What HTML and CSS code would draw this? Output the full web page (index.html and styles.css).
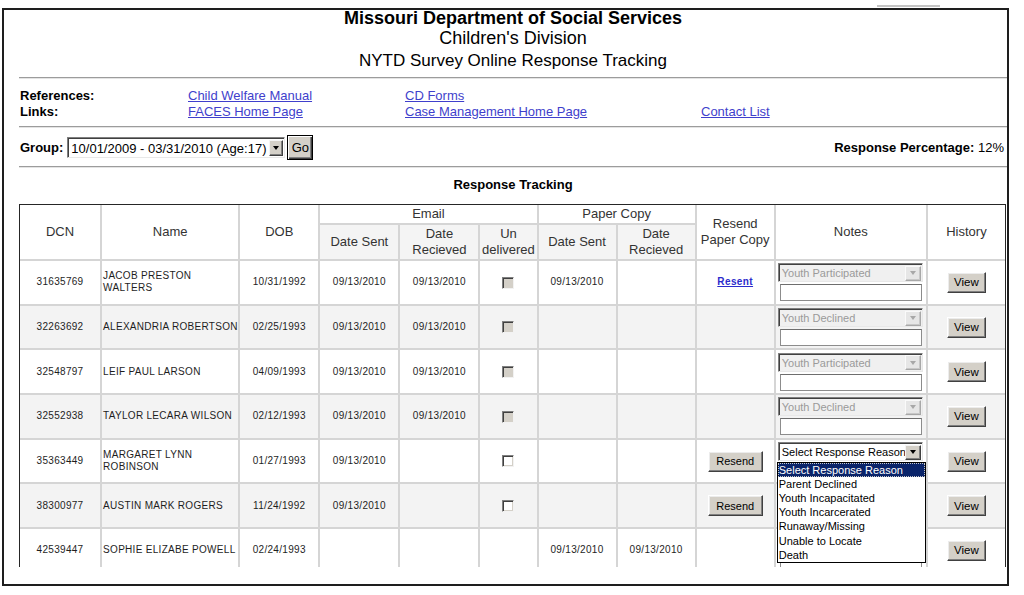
FILE: index.html
```html
<!DOCTYPE html>
<html>
<head>
<meta charset="utf-8">
<title>NYTD Survey Online Response Tracking</title>
<link rel="stylesheet" href="styles.css">
</head>
<body>
<div class="topbar"><div class="tab"></div></div>
<div class="frame">
  <div class="page">
    <div class="titles">
      <div class="t1">Missouri Department of Social Services</div>
      <div class="t2">Children's Division</div>
      <div class="t3">NYTD Survey Online Response Tracking</div>
    </div>
    <div class="rule"></div>
    <div class="refs">
      <div class="lbl">References:</div>
      <div><a href="#">Child Welfare Manual</a></div>
      <div><a href="#">CD Forms</a></div>
      <div></div>
      <div class="lbl">Links:</div>
      <div><a href="#">FACES Home Page</a></div>
      <div><a href="#">Case Management Home Page</a></div>
      <div><a href="#">Contact List</a></div>
    </div>
    <div class="rule r2"></div>
    <div class="grouprow">
      <div class="grp">
        <span class="lbl">Group:</span>
        <div class="sel groupsel"><span class="seltext">10/01/2009 - 03/31/2010 (Age:17)</span><span class="arrow"></span></div>
        <button class="btn go" type="button">Go</button>
      </div>
      <div class="pct"><b>Response Percentage:</b> 12%</div>
    </div>
    <div class="rule r3"></div>
    <div class="sectitle">Response Tracking</div>
    <div class="tablewrap">
      <table class="grid">
        <colgroup>
          <col class="c-dcn"><col class="c-name"><col class="c-dob"><col class="c-d"><col class="c-d"><col class="c-un"><col class="c-p"><col class="c-p"><col class="c-p"><col class="c-notes"><col class="c-hist">
        </colgroup>
        <thead>
          <tr class="hr1">
            <th rowspan="2">DCN</th>
            <th rowspan="2">Name</th>
            <th rowspan="2">DOB</th>
            <th colspan="3">Email</th>
            <th colspan="2">Paper Copy</th>
            <th rowspan="2">Resend<br>Paper Copy</th>
            <th rowspan="2">Notes</th>
            <th rowspan="2" class="last">History</th>
          </tr>
          <tr class="hr2">
            <th class="sub">Date Sent</th>
            <th class="sub">Date<br>Recieved</th>
            <th class="sub">Un<br>delivered</th>
            <th class="sub">Date Sent</th>
            <th class="sub">Date<br>Recieved</th>
          </tr>
        </thead>
        <tbody>
          <tr>
            <td>31635769</td><td class="nm">JACOB PRESTON WALTERS</td><td>10/31/1992</td><td>09/13/2010</td><td>09/13/2010</td>
            <td><span class="cb dis"></span></td><td>09/13/2010</td><td></td><td><a href="#" class="resent">Resent</a></td>
            <td class="notes"><div class="sel nsel dsel"><span class="seltext">Youth Participated</span><span class="arrow"></span></div><input class="ntext" type="text"></td>
            <td class="last"><button class="btn view" type="button">View</button></td>
          </tr>
          <tr class="alt">
            <td>32263692</td><td class="nm">ALEXANDRIA ROBERTSON</td><td>02/25/1993</td><td>09/13/2010</td><td>09/13/2010</td>
            <td><span class="cb dis"></span></td><td></td><td></td><td></td>
            <td class="notes"><div class="sel nsel dsel"><span class="seltext">Youth Declined</span><span class="arrow"></span></div><input class="ntext" type="text"></td>
            <td class="last"><button class="btn view" type="button">View</button></td>
          </tr>
          <tr>
            <td>32548797</td><td class="nm">LEIF PAUL LARSON</td><td>04/09/1993</td><td>09/13/2010</td><td>09/13/2010</td>
            <td><span class="cb dis"></span></td><td></td><td></td><td></td>
            <td class="notes"><div class="sel nsel dsel"><span class="seltext">Youth Participated</span><span class="arrow"></span></div><input class="ntext" type="text"></td>
            <td class="last"><button class="btn view" type="button">View</button></td>
          </tr>
          <tr class="alt">
            <td>32552938</td><td class="nm">TAYLOR LECARA WILSON</td><td>02/12/1993</td><td>09/13/2010</td><td>09/13/2010</td>
            <td><span class="cb dis"></span></td><td></td><td></td><td></td>
            <td class="notes"><div class="sel nsel dsel"><span class="seltext">Youth Declined</span><span class="arrow"></span></div><input class="ntext" type="text"></td>
            <td class="last"><button class="btn view" type="button">View</button></td>
          </tr>
          <tr>
            <td>35363449</td><td class="nm">MARGARET LYNN ROBINSON</td><td>01/27/1993</td><td>09/13/2010</td><td></td>
            <td><span class="cb"></span></td><td></td><td></td><td><button class="btn resend" type="button">Resend</button></td>
            <td class="notes">
              <div class="selwrap">
                <div class="sel nsel"><span class="seltext">Select Response Reason</span><span class="arrow"></span></div>
                <ul class="listbox">
                  <li class="on">Select Response Reason</li>
                  <li>Parent Declined</li>
                  <li>Youth Incapacitated</li>
                  <li>Youth Incarcerated</li>
                  <li>Runaway/Missing</li>
                  <li>Unable to Locate</li>
                  <li>Death</li>
                </ul>
              </div>
              <input class="ntext" type="text">
            </td>
            <td class="last"><button class="btn view" type="button">View</button></td>
          </tr>
          <tr class="alt">
            <td>38300977</td><td class="nm">AUSTIN MARK ROGERS</td><td>11/24/1992</td><td>09/13/2010</td><td></td>
            <td><span class="cb"></span></td><td></td><td></td><td><button class="btn resend" type="button">Resend</button></td>
            <td class="notes"><div class="sel nsel"><span class="seltext"></span><span class="arrow"></span></div><input class="ntext" type="text"></td>
            <td class="last"><button class="btn view" type="button">View</button></td>
          </tr>
          <tr>
            <td>42539447</td><td class="nm">SOPHIE ELIZABE POWELL</td><td>02/24/1993</td><td></td><td></td>
            <td></td><td>09/13/2010</td><td>09/13/2010</td><td></td>
            <td class="notes"><div class="sel nsel"><span class="seltext"></span><span class="arrow"></span></div><input class="ntext" type="text"></td>
            <td class="last"><button class="btn view" type="button">View</button></td>
          </tr>
        </tbody>
      </table>
    </div>
  </div>
</div>
</body>
</html>
```

FILE: styles.css
```css
* { box-sizing: border-box; }
html, body { margin: 0; padding: 0; background: #fff; }
body { font-family: "Liberation Sans", Arial, sans-serif; color: #000; }

.topbar { height: 8px; padding-top: 5px; }
.tab { margin-left: 877px; width: 63px; height: 2px; background: #c4c4c4; }

.frame { margin-left: 2px; width: 1007px; height: 578px; border: 2px solid #1e1e1e; overflow-x: clip; background: #fff; }
.page { width: 1018px; }

.titles { text-align: center; color: #000; }
.t1 { font-size: 18px; font-weight: bold; line-height: 16px; }
.t2 { font-size: 18px; line-height: 25px; }
.t3 { font-size: 17px; line-height: 19px; }

.rule { margin: 7px 15px 0 15px; height: 2px; border-top: 1px solid #9c9c9c; border-bottom: 1px solid #e4e4e4; }
.r2 { margin-top: 6px; }
.r3 { margin-top: 6px; }

.refs { display: grid; grid-template-columns: 168px 217px 296px 1fr; padding: 9px 0 0 16px; font-size: 13px; line-height: 16px; }
.lbl { font-weight: bold; font-size: 13px; }
.refs a { color: #3f3fcc; text-decoration: underline; }

.grouprow { display: flex; justify-content: space-between; align-items: center; height: 25px; margin-top: 7px; padding: 0 18px 0 16px; font-size: 13px; }
.grp { display: flex; align-items: center; }
.grp .lbl { margin-right: 4px; }
.pct { white-space: nowrap; }

.sel { display: flex; align-items: center; background: #fff; border: 1px solid; border-color: #808080 #e8e8e8 #e8e8e8 #808080; box-shadow: inset 1px 1px #404040; font-size: 11px; color: #000; }
.seltext { flex: 1; white-space: nowrap; overflow: hidden; padding-left: 3px; padding-top: 1px; }
.arrow { width: 15px; height: 15px; margin-right: 1px; margin-top: 1px; display: flex; align-items: center; justify-content: center; background: #d4d0c8; border: 1px solid; border-color: #f4f4f4 #404040 #404040 #f4f4f4; box-shadow: inset -1px -1px #808080; }
.arrow::after { content: ""; width: 0; height: 0; border-left: 3.5px solid transparent; border-right: 3.5px solid transparent; border-top: 4px solid #000; }

.groupsel { width: 218px; height: 21px; font-size: 13px; }
.groupsel .seltext { padding-left: 3px; }
.groupsel .arrow { width: 14px; height: 16px; }

.btn { font-family: "Liberation Sans", Arial, sans-serif; font-size: 11px; color: #000; background: #d4d0c8; border: 1px solid; border-color: #fff #404040 #404040 #fff; box-shadow: inset -1px -1px #808080, inset 1px 1px #ececec; padding: 0; margin: 0; cursor: default; }
.go { width: 26px; height: 25px; margin-left: 2px; font-size: 13px; border: 1px solid #000; box-shadow: inset 1px 1px #fff, inset -1px -1px #404040, inset -2px -2px #808080; }
.view { width: 39px; height: 21px; font-size: 11.5px; }
.resend { width: 55px; height: 21px; }

.sectitle { font-weight: bold; font-size: 13px; line-height: 16px; text-align: center; padding-top: 9px; }

.tablewrap { margin: 11px 0 0 15px; height: 363px; overflow: hidden; }
.grid { border-collapse: separate; border-spacing: 0; table-layout: fixed; width: 987px; border: 1px solid #262626; border-bottom: 0; }
.c-dcn { width: 82px; }
.c-name { width: 138px; }
.c-dob { width: 80px; }
.c-d { width: 80px; }
.c-un { width: 58px; }
.c-p { width: 79px; }
.c-notes { width: 152px; }
.c-hist { width: 77px; }

.grid th, .grid td { border-right: 2px solid #d5d5d5; border-bottom: 2px solid #d5d5d5; padding: 0; text-align: center; vertical-align: middle; }
.grid .last { border-right: 0; }
.grid th { font-weight: normal; font-size: 13px; line-height: 16px; color: #333; }
.hr1 th { height: 20px; }
.hr2 th { height: 36px; }
.grid th.sub { background: #f4f4f4; }

.grid td { font-size: 10px; letter-spacing: 0.3px; line-height: 12px; color: #1e1e1e; height: 44.7px; }
.grid tr.alt td { background: #f3f3f3; }
.grid td.nm { text-align: left; padding-left: 1px; }

.cb { display: inline-block; width: 12px; height: 12px; vertical-align: middle; background: #fff; border: 1px solid; border-color: #808080 #f2f2f2 #f2f2f2 #808080; box-shadow: inset 1px 1px #404040, inset -1px -1px #d4d0c8; }
.cb.dis { background: #d4d0c8; }

.resent { color: #2b2bcc; font-weight: bold; font-size: 10px; letter-spacing: 0.4px; text-decoration: underline; }

.grid td.notes { text-align: left; padding-left: 2px; letter-spacing: 0; }
.nsel { width: 145px; height: 19px; }
.nsel .arrow { width: 16px; height: 15px; }
.dsel { background: #f0f0f0; color: #9a9a9a; }
.dsel .arrow { background: #e6e6e6; border-color: #fafafa #a8a8a8 #a8a8a8 #fafafa; box-shadow: inset -1px -1px #c8c8c8; }
.dsel .arrow::after { border-top-color: #a8a8a8; }
.ntext { display: block; width: 142px; height: 17px; margin: 2px 0 0 2px; padding: 0; border: 1px solid #8c8c8c; border-top-color: #6e6e6e; background: #fff; outline: none; font-size: 11px; }

.selwrap { position: relative; }
.listbox { position: absolute; z-index: 5; left: -1px; top: 100%; margin: 1px 0 0 0; padding: 0; list-style: none; width: 149px; background: #fff; border: 1px solid #000; font-size: 11px; line-height: 14px; color: #000; }
.listbox li { padding-left: 1px; white-space: nowrap; height: 14.1px; }
.listbox li.on { background: #0a246a; color: #fff; outline: 1px dotted #c8c8c8; outline-offset: -1px; }
```
